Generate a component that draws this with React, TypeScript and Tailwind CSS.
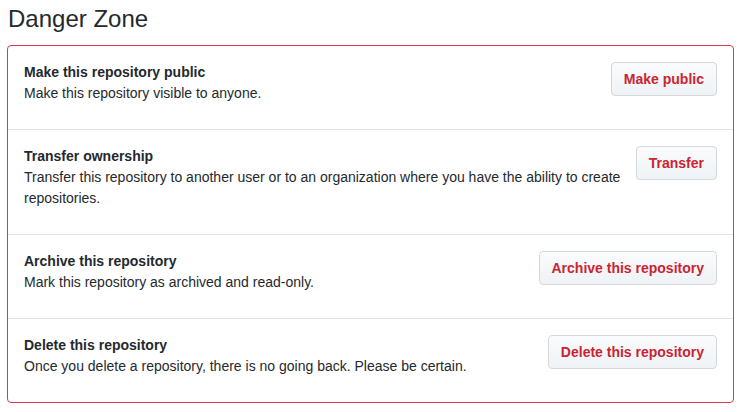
const rows = [
  {
    title: "Make this repository public",
    desc: "Make this repository visible to anyone.",
    action: "Make public",
  },
  {
    title: "Transfer ownership",
    desc: "Transfer this repository to another user or to an organization where you have the ability to create repositories.",
    action: "Transfer",
  },
  {
    title: "Archive this repository",
    desc: "Mark this repository as archived and read-only.",
    action: "Archive this repository",
  },
  {
    title: "Delete this repository",
    desc: "Once you delete a repository, there is no going back. Please be certain.",
    action: "Delete this repository",
  },
];

const App = () => {
  return (
    <div className="bg-white px-[7px] pt-[1px] font-['Liberation_Sans',Arial,sans-serif] text-[#24292e]">
      <h2 className="mb-[8px] pl-[1px] text-[24px] leading-[36px] font-normal">Danger Zone</h2>
      <div className="rounded-[4px] border border-[#d73a49]">
        {rows.map((row, i) => (
          <div
            key={row.title}
            className={`flex items-start gap-[6px] px-[16px] pt-[16px] pb-[15px] ${i > 0 ? "border-t border-[#e1e4e8]" : ""}`}
          >
            <div className="flex-1 text-[14px] leading-[21px]">
              <strong className="block font-bold">{row.title}</strong>
              <p className="mb-[10px]">{row.desc}</p>
            </div>
            <button className="h-[34px] shrink-0 rounded-[4px] border border-[#d5d8db] bg-gradient-to-b from-[#fafbfc] to-[#eff3f6] px-[12px] text-[14px] font-bold text-[#cb2431]">
              {row.action}
            </button>
          </div>
        ))}
      </div>
    </div>
  );
};

export default App;
